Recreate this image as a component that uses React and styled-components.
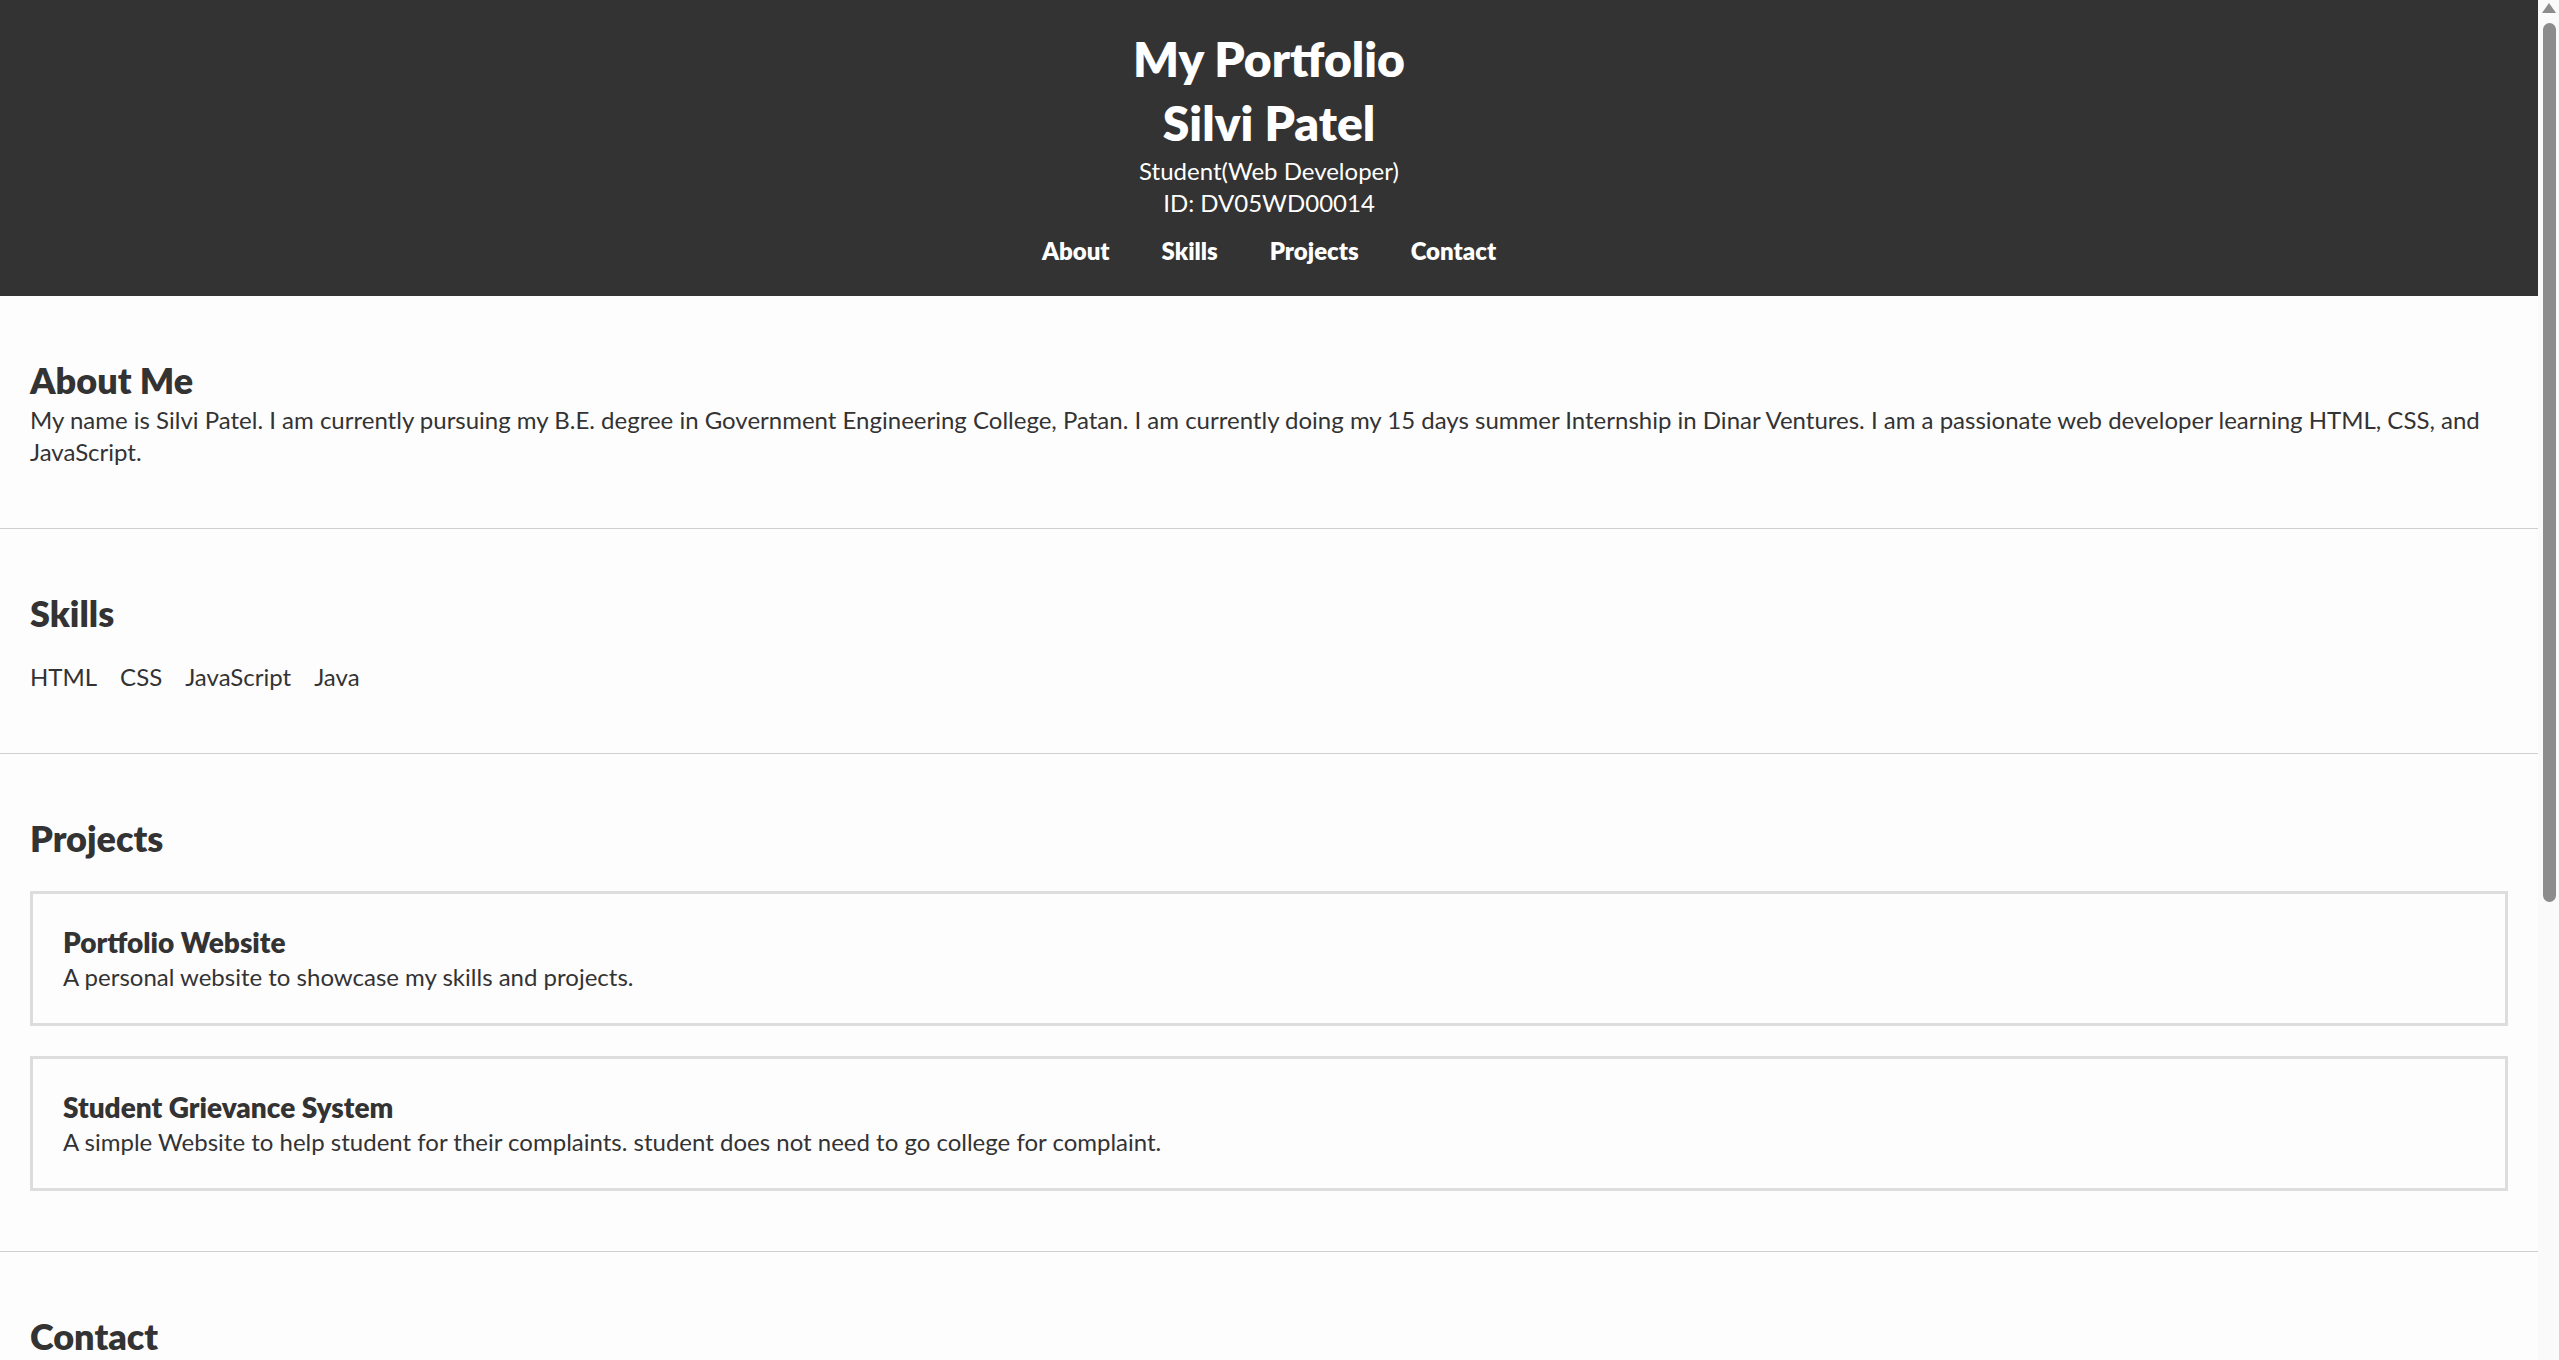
import React from "react";
import styled, { createGlobalStyle } from "styled-components";

const GlobalStyle = createGlobalStyle`
  html, body {
    margin: 0;
    padding: 0;
    height: 100%;
    overflow: hidden;
  }

  body {
    font-family: Lato, "Open Sans", sans-serif;
    font-size: 24px;
    line-height: 1.33;
    color: #333;
    background: #fefdfe;
  }
`;

const Shell = styled.div`
  display: flex;
  height: 100vh;
`;

const Page = styled.div`
  flex: 1;
  min-width: 0;
  overflow-y: auto;
  scrollbar-width: none;

  &::-webkit-scrollbar {
    display: none;
  }
`;

const ScrollTrack = styled.aside`
  width: 21px;
  flex-shrink: 0;
  background: #fafafa;
  display: flex;
  flex-direction: column;
  padding-top: 3px;
`;

const ScrollArrow = styled.div`
  width: 0;
  height: 0;
  margin-left: 4px;
  border-left: 7px solid transparent;
  border-right: 7px solid transparent;
  border-bottom: 10px solid #8c8c8c;
`;

const ScrollThumb = styled.div`
  width: 13px;
  height: 879px;
  margin: 10px 0 0 5px;
  background: #8c8c8c;
  border-radius: 7px;
`;

const Header = styled.header`
  background: #333;
  color: #fff;
  text-align: center;
  padding: 27px 0 29px;
`;

const Title = styled.h1`
  margin: 0;
  font-size: 48px;
  line-height: 64px;
  font-weight: 800;
`;

const Subtitle = styled.p`
  margin: 0;
  font-size: 24px;
  line-height: 32px;
`;

const Nav = styled.nav`
  display: flex;
  justify-content: center;
  gap: 52px;
  margin-top: 16px;

  a {
    color: #fff;
    text-decoration: none;
    font-weight: 800;
    line-height: 32px;
  }
`;

const Section = styled.section`
  padding: 30px;
  border-bottom: 1px solid #d0d0d0;
`;

const Heading = styled.h2`
  margin: 30px 0 0;
  font-size: 36px;
  line-height: 48px;
  font-weight: 800;
`;

const Text = styled.p`
  margin: 0 0 30px;
`;

const SkillList = styled.ul`
  display: flex;
  gap: 23px;
  list-style: none;
  margin: 24px 0 30px;
  padding: 0;
`;

const ProjectList = styled.div`
  display: flex;
  flex-direction: column;
  gap: 30px;
  margin: 29px 0 30px;
`;

const Card = styled.div`
  border: 3px solid #ddd;
  padding: 30px;
`;

const CardTitle = styled.h3`
  margin: 0;
  font-size: 28px;
  line-height: 37px;
  font-weight: 800;
`;

const CardText = styled.p`
  margin: 0;
`;

const Form = styled.form`
  display: flex;
  flex-direction: column;
  gap: 16px;
  max-width: 700px;
  margin: 24px 0 30px;

  input,
  textarea {
    font: inherit;
    padding: 10px 14px;
    border: 2px solid #ccc;
    color: #333;
  }

  textarea {
    height: 160px;
    resize: none;
  }
`;

const SendButton = styled.button`
  align-self: flex-start;
  font: inherit;
  font-weight: 700;
  color: #fff;
  background: #333;
  border: none;
  padding: 10px 30px;
`;

const Footer = styled.footer`
  background: #333;
  color: #fff;
  text-align: center;
  padding: 24px 0;
`;

const skills = ["HTML", "CSS", "JavaScript", "Java"];

const projects = [
  {
    title: "Portfolio Website",
    text: "A personal website to showcase my skills and projects.",
  },
  {
    title: "Student Grievance System",
    text: "A simple Website to help student for their complaints. student does not need to go college for complaint.",
  },
];

const App = () => {
  return (
    <Shell>
      <GlobalStyle />
      <Page>
        <Header>
          <Title>My Portfolio</Title>
          <Title>Silvi Patel</Title>
          <Subtitle>Student(Web Developer)</Subtitle>
          <Subtitle>ID: DV05WD00014</Subtitle>
          <Nav>
            <a href="#about">About</a>
            <a href="#skills">Skills</a>
            <a href="#projects">Projects</a>
            <a href="#contact">Contact</a>
          </Nav>
        </Header>

        <main>
          <Section id="about">
            <Heading>About Me</Heading>
            <Text>
              My name is Silvi Patel. I am currently pursuing my B.E. degree in
              Government Engineering College, Patan. I am currently doing my 15
              days summer Internship in Dinar Ventures. I am a passionate web
              developer learning HTML, CSS, and JavaScript.
            </Text>
          </Section>

          <Section id="skills">
            <Heading>Skills</Heading>
            <SkillList>
              {skills.map((s) => (
                <li key={s}>{s}</li>
              ))}
            </SkillList>
          </Section>

          <Section id="projects">
            <Heading>Projects</Heading>
            <ProjectList>
              {projects.map((p) => (
                <Card key={p.title}>
                  <CardTitle>{p.title}</CardTitle>
                  <CardText>{p.text}</CardText>
                </Card>
              ))}
            </ProjectList>
          </Section>

          <Section id="contact">
            <Heading>Contact</Heading>
            <Form onSubmit={(e) => e.preventDefault()}>
              <input type="text" placeholder="Your Name" />
              <input type="email" placeholder="Your Email" />
              <textarea placeholder="Your Message" />
              <SendButton type="submit">Send</SendButton>
            </Form>
          </Section>
        </main>

        <Footer>© 2024 Silvi Patel. All rights reserved.</Footer>
      </Page>

      <ScrollTrack aria-hidden="true">
        <ScrollArrow />
        <ScrollThumb />
      </ScrollTrack>
    </Shell>
  );
};

export default App;
